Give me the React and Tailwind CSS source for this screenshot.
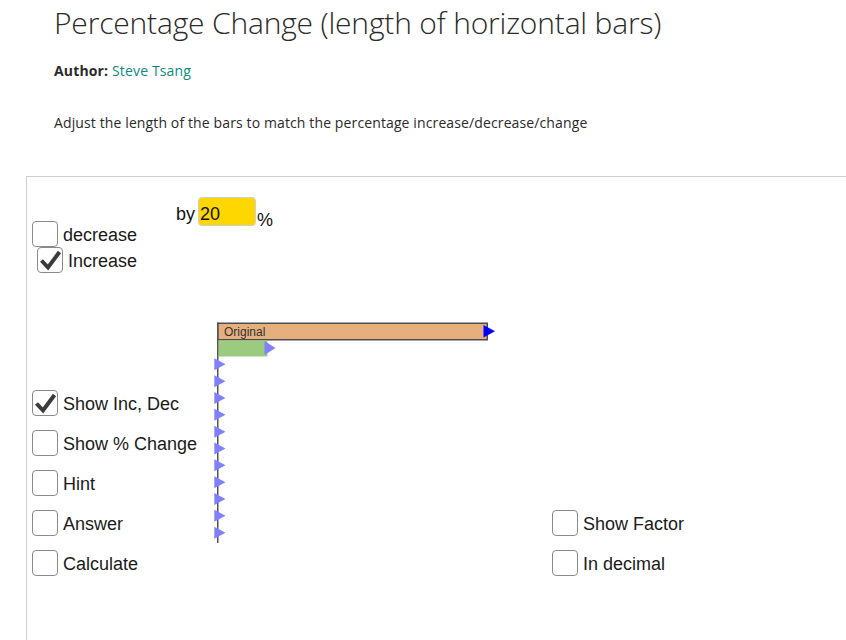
import React from "react";

const SANS = { fontFamily: '"Liberation Sans", Arial, sans-serif' };

function Box({ checked }) {
  return (
    <span className="w-[26px] h-[26px] shrink-0 rounded-[4px] border border-[#8a8a8a] bg-white flex items-center justify-center">
      {checked && (
        <svg width="24" height="24" viewBox="0 0 24 24">
          <path d="M3.5 12.5 L10 19.5 L21.5 4" fill="none" stroke="#3a3a3a" strokeWidth="4" strokeLinejoin="miter" />
        </svg>
      )}
    </span>
  );
}

function CheckRow({ label, checked = false, className = "" }) {
  return (
    <div className={`flex items-center gap-[5px] h-[26px] ${className}`}>
      <Box checked={checked} />
      <span className="text-[18px] leading-[26px] pt-[1px] text-[#1a1a1a] whitespace-nowrap">{label}</span>
    </div>
  );
}

function BarChart() {
  const marks = Array.from({ length: 11 }, (_, i) => 49.3 + i * 16.84);
  return (
    <svg width="300" height="235" viewBox="0 0 300 235" className="shrink-0">
      <rect x="12.75" y="8.25" width="269.5" height="16.5" fill="#e6b07e" stroke="#4d4d4d" strokeWidth="1.5" />
      <text x="19" y="20.5" fontSize="12" fill="#333" fontFamily="Liberation Sans, Arial, sans-serif">
        Original
      </text>
      <rect x="13.5" y="25.5" width="49" height="16" fill="#9bcb7f" />
      <line x1="12.75" y1="7.5" x2="12.75" y2="228" stroke="#555" strokeWidth="1.5" />
      <polygon points="278.5,10 290,16.2 278.5,22.5" fill="#0000ff" />
      <polygon points="59.5,26 70.5,33 59.5,40" fill="#8080ff" />
      {marks.map((c) => (
        <polygon key={c} points={`9.3,${c - 6} 20.5,${c} 9.3,${c + 6}`} fill="#8080ff" />
      ))}
    </svg>
  );
}

export default function App() {
  return (
    <div className="w-[846px] h-[640px] overflow-hidden bg-white">
      <header className="pl-[54px] pt-[3px] text-[#2a2a2a]" style={{ fontFamily: '"Open Sans", sans-serif' }}>
        <h1 className="text-[30px] leading-[40px] font-light tracking-[-0.18px] whitespace-nowrap">
          Percentage Change (length of horizontal bars)
        </h1>
        <p className="mt-[18px] text-[14px] leading-[20px] tracking-[0.15px]">
          <span className="font-bold">Author:</span> <span className="text-[#0d8a80]">Steve Tsang</span>
        </p>
        <p className="mt-[32px] text-[14px] leading-[20px] tracking-[0.12px]">
          Adjust the length of the bars to match the percentage increase/decrease/change
        </p>
      </header>

      <section className="ml-[26px] mt-[43px] w-[900px] h-[500px] border-l border-t border-[#cfcfcf]" style={SANS}>
        <div className="flex items-start h-[49px] pl-[149px] pt-[20px] text-[18px] text-[#111]">
          <span className="leading-[24px] pt-[5px]">by</span>
          <div className="ml-[3px] w-[58px] h-[29px] rounded-[4px] border border-[#cfcfcf] bg-[#ffd700] pl-[1px] pt-[4px] leading-[24px]">
            20
          </div>
          <span className="ml-[1px] leading-[24px] pt-[11px]">%</span>
        </div>
        <CheckRow label="decrease" className="mt-[-5px] ml-[5px]" />
        <CheckRow label="Increase" checked className="ml-[10px]" />

        <div className="flex items-start">
          <div className="w-[178px] shrink-0 pl-[5px] pt-[117px] flex flex-col gap-[14px]">
            <CheckRow label="Show Inc, Dec" checked />
            <CheckRow label="Show % Change" />
            <CheckRow label="Hint" />
            <CheckRow label="Answer" />
            <CheckRow label="Calculate" />
          </div>
          <div className="mt-[42px]">
            <BarChart />
          </div>
          <div className="ml-[47px] pt-[237px] flex flex-col gap-[14px]">
            <CheckRow label="Show Factor" />
            <CheckRow label="In decimal" />
          </div>
        </div>
      </section>
    </div>
  );
}
